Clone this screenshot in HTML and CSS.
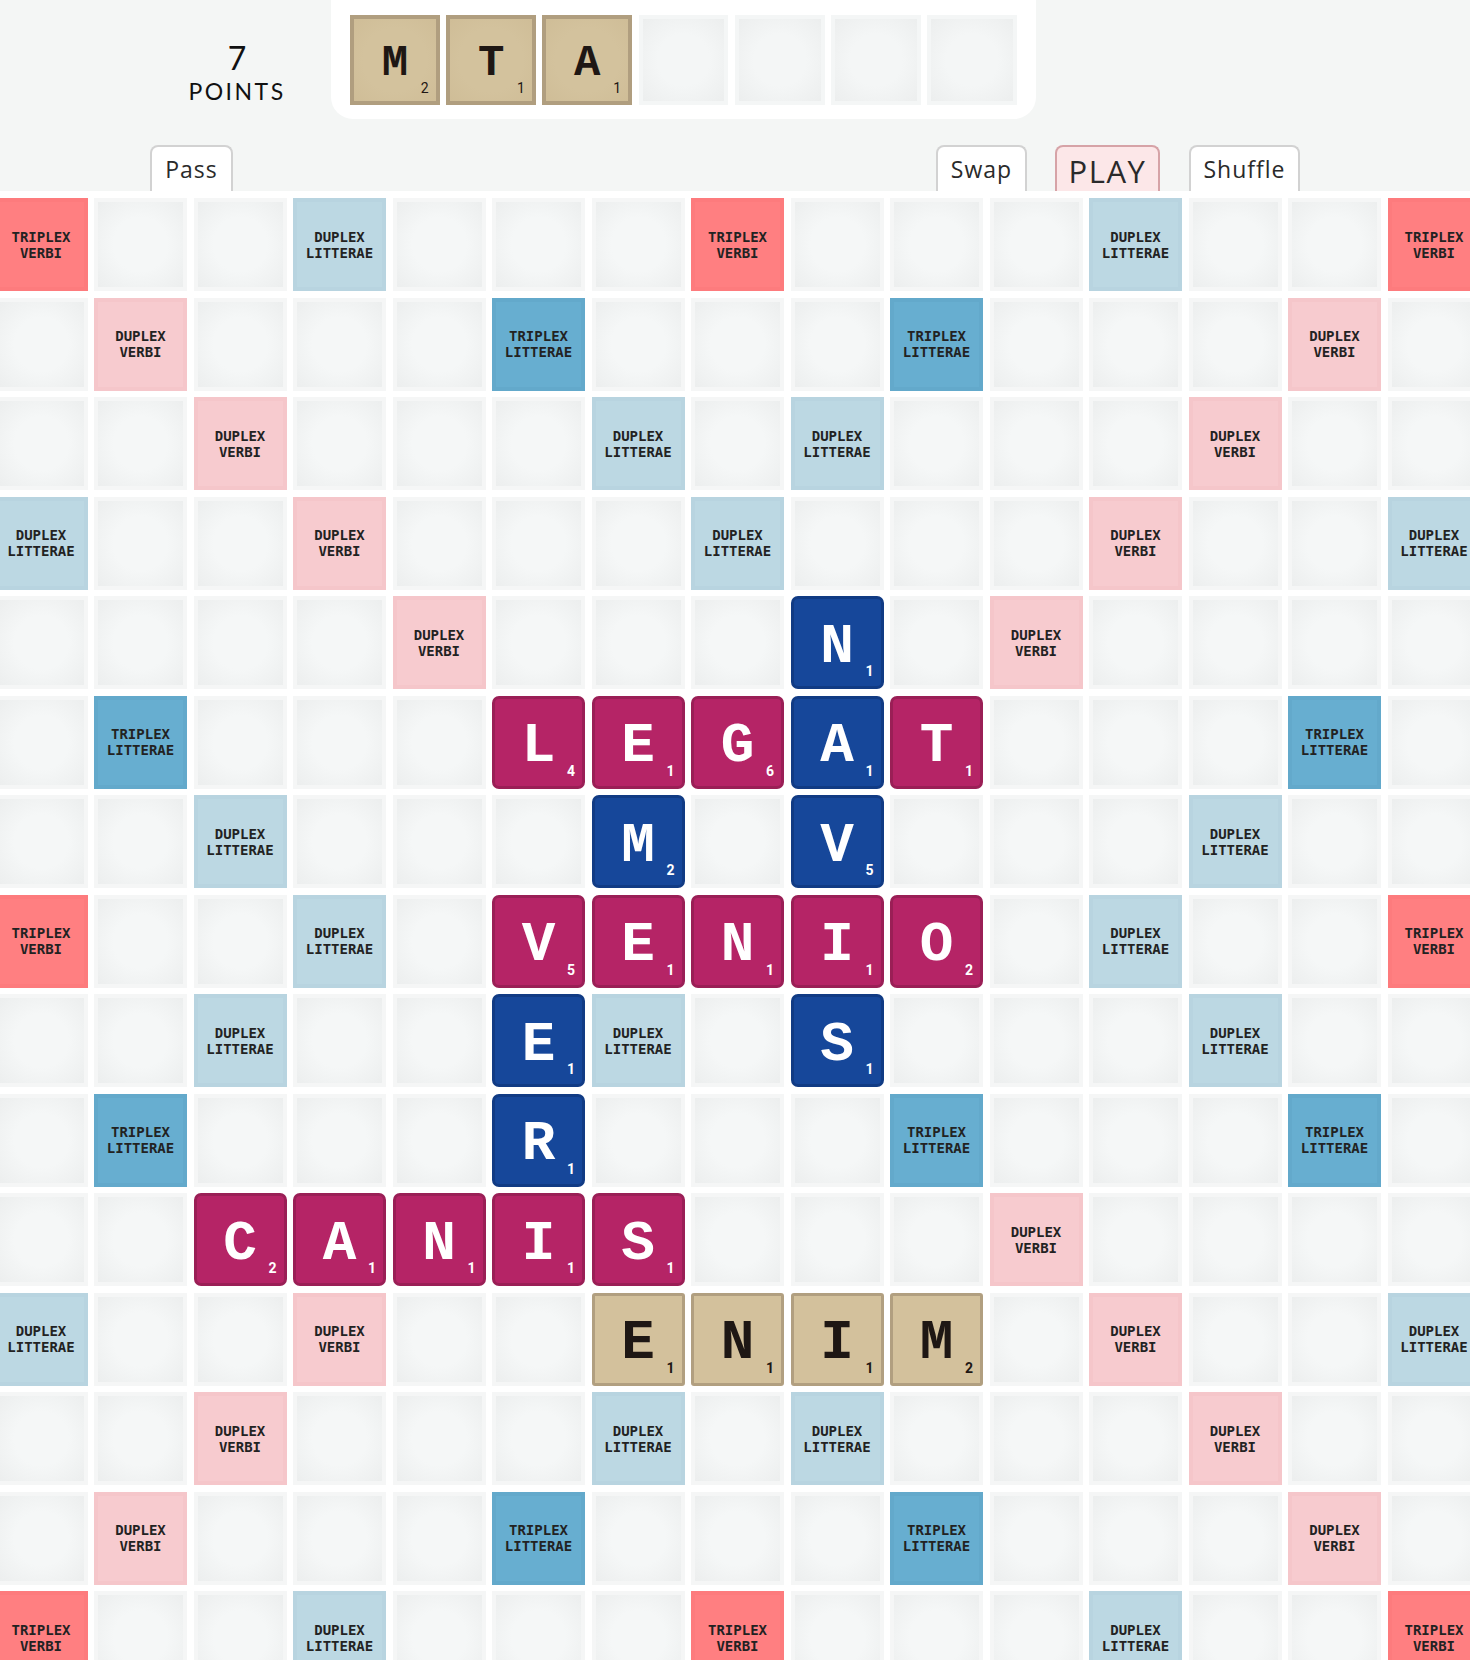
FILE: index.html
```html
<!DOCTYPE html>
<html lang="la">
<head>
<meta charset="utf-8">
<title>Verba</title>
<link rel="stylesheet" href="styles.css">
</head>
<body>
<header class="top">
  <div class="score">
    <div class="num">7</div>
    <div class="lbl">POINTS</div>
  </div>
  <div class="rack">
    <div class="rtile">M<span class="rp">2</span></div>
    <div class="rtile">T<span class="rp">1</span></div>
    <div class="rtile">A<span class="rp">1</span></div>
    <div class="slot"></div>
    <div class="slot"></div>
    <div class="slot"></div>
    <div class="slot"></div>
  </div>
</header>
<nav class="actions">
  <button class="btn pass">Pass</button>
  <div class="spacer"></div>
  <button class="btn swap">Swap</button>
  <button class="btn play">PLAY</button>
  <button class="btn shuffle">Shuffle</button>
</nav>
<main class="board">
  <!-- row 0 -->
  <div class="cell tw"><span>TRIPLEX<br>VERBI</span></div><div class="cell"></div><div class="cell"></div><div class="cell dl"><span>DUPLEX<br>LITTERAE</span></div><div class="cell"></div><div class="cell"></div><div class="cell"></div><div class="cell tw"><span>TRIPLEX<br>VERBI</span></div><div class="cell"></div><div class="cell"></div><div class="cell"></div><div class="cell dl"><span>DUPLEX<br>LITTERAE</span></div><div class="cell"></div><div class="cell"></div><div class="cell tw"><span>TRIPLEX<br>VERBI</span></div>
  <!-- row 1 -->
  <div class="cell"></div><div class="cell dw"><span>DUPLEX<br>VERBI</span></div><div class="cell"></div><div class="cell"></div><div class="cell"></div><div class="cell tl"><span>TRIPLEX<br>LITTERAE</span></div><div class="cell"></div><div class="cell"></div><div class="cell"></div><div class="cell tl"><span>TRIPLEX<br>LITTERAE</span></div><div class="cell"></div><div class="cell"></div><div class="cell"></div><div class="cell dw"><span>DUPLEX<br>VERBI</span></div><div class="cell"></div>
  <!-- row 2 -->
  <div class="cell"></div><div class="cell"></div><div class="cell dw"><span>DUPLEX<br>VERBI</span></div><div class="cell"></div><div class="cell"></div><div class="cell"></div><div class="cell dl"><span>DUPLEX<br>LITTERAE</span></div><div class="cell"></div><div class="cell dl"><span>DUPLEX<br>LITTERAE</span></div><div class="cell"></div><div class="cell"></div><div class="cell"></div><div class="cell dw"><span>DUPLEX<br>VERBI</span></div><div class="cell"></div><div class="cell"></div>
  <!-- row 3 -->
  <div class="cell dl"><span>DUPLEX<br>LITTERAE</span></div><div class="cell"></div><div class="cell"></div><div class="cell dw"><span>DUPLEX<br>VERBI</span></div><div class="cell"></div><div class="cell"></div><div class="cell"></div><div class="cell dl"><span>DUPLEX<br>LITTERAE</span></div><div class="cell"></div><div class="cell"></div><div class="cell"></div><div class="cell dw"><span>DUPLEX<br>VERBI</span></div><div class="cell"></div><div class="cell"></div><div class="cell dl"><span>DUPLEX<br>LITTERAE</span></div>
  <!-- row 4 -->
  <div class="cell"></div><div class="cell"></div><div class="cell"></div><div class="cell"></div><div class="cell dw"><span>DUPLEX<br>VERBI</span></div><div class="cell"></div><div class="cell"></div><div class="cell"></div><div class="tile blue"><b>N</b><i>1</i></div><div class="cell"></div><div class="cell dw"><span>DUPLEX<br>VERBI</span></div><div class="cell"></div><div class="cell"></div><div class="cell"></div><div class="cell"></div>
  <!-- row 5 -->
  <div class="cell"></div><div class="cell tl"><span>TRIPLEX<br>LITTERAE</span></div><div class="cell"></div><div class="cell"></div><div class="cell"></div><div class="tile mag"><b>L</b><i>4</i></div><div class="tile mag"><b>E</b><i>1</i></div><div class="tile mag"><b>G</b><i>6</i></div><div class="tile blue"><b>A</b><i>1</i></div><div class="tile mag"><b>T</b><i>1</i></div><div class="cell"></div><div class="cell"></div><div class="cell"></div><div class="cell tl"><span>TRIPLEX<br>LITTERAE</span></div><div class="cell"></div>
  <!-- row 6 -->
  <div class="cell"></div><div class="cell"></div><div class="cell dl"><span>DUPLEX<br>LITTERAE</span></div><div class="cell"></div><div class="cell"></div><div class="cell"></div><div class="tile blue"><b>M</b><i>2</i></div><div class="cell"></div><div class="tile blue"><b>V</b><i>5</i></div><div class="cell"></div><div class="cell"></div><div class="cell"></div><div class="cell dl"><span>DUPLEX<br>LITTERAE</span></div><div class="cell"></div><div class="cell"></div>
  <!-- row 7 -->
  <div class="cell tw"><span>TRIPLEX<br>VERBI</span></div><div class="cell"></div><div class="cell"></div><div class="cell dl"><span>DUPLEX<br>LITTERAE</span></div><div class="cell"></div><div class="tile mag"><b>V</b><i>5</i></div><div class="tile mag"><b>E</b><i>1</i></div><div class="tile mag"><b>N</b><i>1</i></div><div class="tile mag"><b>I</b><i>1</i></div><div class="tile mag"><b>O</b><i>2</i></div><div class="cell"></div><div class="cell dl"><span>DUPLEX<br>LITTERAE</span></div><div class="cell"></div><div class="cell"></div><div class="cell tw"><span>TRIPLEX<br>VERBI</span></div>
  <!-- row 8 -->
  <div class="cell"></div><div class="cell"></div><div class="cell dl"><span>DUPLEX<br>LITTERAE</span></div><div class="cell"></div><div class="cell"></div><div class="tile blue"><b>E</b><i>1</i></div><div class="cell dl"><span>DUPLEX<br>LITTERAE</span></div><div class="cell"></div><div class="tile blue"><b>S</b><i>1</i></div><div class="cell"></div><div class="cell"></div><div class="cell"></div><div class="cell dl"><span>DUPLEX<br>LITTERAE</span></div><div class="cell"></div><div class="cell"></div>
  <!-- row 9 -->
  <div class="cell"></div><div class="cell tl"><span>TRIPLEX<br>LITTERAE</span></div><div class="cell"></div><div class="cell"></div><div class="cell"></div><div class="tile blue"><b>R</b><i>1</i></div><div class="cell"></div><div class="cell"></div><div class="cell"></div><div class="cell tl"><span>TRIPLEX<br>LITTERAE</span></div><div class="cell"></div><div class="cell"></div><div class="cell"></div><div class="cell tl"><span>TRIPLEX<br>LITTERAE</span></div><div class="cell"></div>
  <!-- row 10 -->
  <div class="cell"></div><div class="cell"></div><div class="tile mag"><b>C</b><i>2</i></div><div class="tile mag"><b>A</b><i>1</i></div><div class="tile mag"><b>N</b><i>1</i></div><div class="tile mag"><b>I</b><i>1</i></div><div class="tile mag"><b>S</b><i>1</i></div><div class="cell"></div><div class="cell"></div><div class="cell"></div><div class="cell dw"><span>DUPLEX<br>VERBI</span></div><div class="cell"></div><div class="cell"></div><div class="cell"></div><div class="cell"></div>
  <!-- row 11 -->
  <div class="cell dl"><span>DUPLEX<br>LITTERAE</span></div><div class="cell"></div><div class="cell"></div><div class="cell dw"><span>DUPLEX<br>VERBI</span></div><div class="cell"></div><div class="cell"></div><div class="tile sand"><b>E</b><i>1</i></div><div class="tile sand"><b>N</b><i>1</i></div><div class="tile sand"><b>I</b><i>1</i></div><div class="tile sand"><b>M</b><i>2</i></div><div class="cell"></div><div class="cell dw"><span>DUPLEX<br>VERBI</span></div><div class="cell"></div><div class="cell"></div><div class="cell dl"><span>DUPLEX<br>LITTERAE</span></div>
  <!-- row 12 -->
  <div class="cell"></div><div class="cell"></div><div class="cell dw"><span>DUPLEX<br>VERBI</span></div><div class="cell"></div><div class="cell"></div><div class="cell"></div><div class="cell dl"><span>DUPLEX<br>LITTERAE</span></div><div class="cell"></div><div class="cell dl"><span>DUPLEX<br>LITTERAE</span></div><div class="cell"></div><div class="cell"></div><div class="cell"></div><div class="cell dw"><span>DUPLEX<br>VERBI</span></div><div class="cell"></div><div class="cell"></div>
  <!-- row 13 -->
  <div class="cell"></div><div class="cell dw"><span>DUPLEX<br>VERBI</span></div><div class="cell"></div><div class="cell"></div><div class="cell"></div><div class="cell tl"><span>TRIPLEX<br>LITTERAE</span></div><div class="cell"></div><div class="cell"></div><div class="cell"></div><div class="cell tl"><span>TRIPLEX<br>LITTERAE</span></div><div class="cell"></div><div class="cell"></div><div class="cell"></div><div class="cell dw"><span>DUPLEX<br>VERBI</span></div><div class="cell"></div>
  <!-- row 14 -->
  <div class="cell tw"><span>TRIPLEX<br>VERBI</span></div><div class="cell"></div><div class="cell"></div><div class="cell dl"><span>DUPLEX<br>LITTERAE</span></div><div class="cell"></div><div class="cell"></div><div class="cell"></div><div class="cell tw"><span>TRIPLEX<br>VERBI</span></div><div class="cell"></div><div class="cell"></div><div class="cell"></div><div class="cell dl"><span>DUPLEX<br>LITTERAE</span></div><div class="cell"></div><div class="cell"></div><div class="cell tw"><span>TRIPLEX<br>VERBI</span></div>
</main>
</body>
</html>
```
FILE: styles.css
```css
html, body {
  margin: 0;
  padding: 0;
  overflow: hidden;
  background: #f4f6f5;
}
body {
  font-family: "Open Sans", "Noto Sans", sans-serif;
  color: #1a1a1a;
}

/* ---------- header ---------- */
.top {
  display: flex;
  height: 119px;
}
.score {
  width: 118px;
  margin-left: 178px;
  padding-top: 38px;
  text-align: center;
  color: #111;
  font-family: "Lato", "Open Sans", sans-serif;
}
.num {
  font-size: 32px;
  line-height: 39px;
}
.lbl {
  font-size: 23px;
  line-height: 28px;
  letter-spacing: 2.5px;
}
.rack {
  margin-left: 35px;
  width: 705px;
  height: 119px;
  box-sizing: border-box;
  padding: 15px 19px 0 19px;
  background: #fff;
  border-radius: 0 0 22px 22px;
  display: flex;
  gap: 6.5px;
}
.rtile, .slot {
  position: relative;
  flex: 1;
  height: 90px;
  box-sizing: border-box;
}
.rtile {
  border: 4px solid #b09e7f;
  background: radial-gradient(circle at 50% 50%, #d3c29d 55%, #cfbd97 100%);
  font-family: "Liberation Mono", "DejaVu Sans Mono", monospace;
  font-weight: 700;
  font-size: 44px;
  color: #1e1714;
  display: flex;
  align-items: center;
  justify-content: center;
  padding-top: 5px;
}
.rp {
  position: absolute;
  right: 7px;
  bottom: 6px;
  font-family: "Roboto", sans-serif;
  font-weight: 400;
  font-size: 14px;
  line-height: 14px;
}
.slot {
  border: 4px solid #f4f6f6;
  background: radial-gradient(circle at 50% 50%, #f4f6f6 45%, #eceeee 100%);
}

/* ---------- buttons ---------- */
.actions {
  display: flex;
  height: 46px;
  margin-top: 26px;
  padding: 0 170px 0 150px;
}
.spacer { flex: 1; }
.btn {
  height: 48px;
  box-sizing: border-box;
  border: 2px solid #d2d2d2;
  border-bottom: none;
  border-radius: 8px 8px 0 0;
  background: #fff;
  font-family: "Open Sans", "Noto Sans", sans-serif;
  font-size: 23px;
  letter-spacing: 1px;
  color: #2a2a2a;
  padding: 0 0 3px;
  cursor: pointer;
}
.pass { width: 83px; }
.swap { width: 91px; }
.play {
  width: 105px;
  margin-left: 28px;
  background: #fce7e8;
  border-color: #d6a3a7;
  font-size: 31px;
  letter-spacing: 1.5px;
  padding-top: 3px;
}
.shuffle { width: 111px; margin-left: 29px; }

/* ---------- board ---------- */
.board {
  position: relative;
  width: 1486px;
  margin-left: -5.5px;
  padding-top: 7px;
  background: #fff;
  display: grid;
  grid-template-columns: repeat(15, 93px);
  grid-auto-rows: 93px;
  gap: 6.5px;
}
.cell {
  box-sizing: border-box;
  border: 4px solid #f5f6f6;
  background: radial-gradient(circle at 50% 50%, #f5f7f7 45%, #eceeee 100%);
  display: flex;
  align-items: center;
  justify-content: center;
  text-align: center;
}
.cell span {
  font-family: "DejaVu Sans Mono", monospace;
  font-weight: 700;
  font-size: 14px;
  line-height: 16px;
  color: #222;
}
.tw {
  background: #ff7f81;
  border-color: #fd7b7d;
}
.dw {
  background: #f7cbcf;
  border-color: #f5c6ca;
}
.dl {
  background: #bcd8e3;
  border-color: #b8d4e0;
}
.tl {
  background: #67aed0;
  border-color: #63a9cb;
}

.tile {
  position: relative;
  box-sizing: border-box;
  border: 3px solid;
  border-radius: 7px;
  display: flex;
  align-items: center;
  justify-content: center;
  padding-top: 8px;
  color: #fff;
}
.tile b {
  font-family: "Liberation Mono", "DejaVu Sans Mono", monospace;
  font-weight: 700;
  font-size: 56px;
  line-height: 1;
}
.tile i {
  position: absolute;
  right: 7px;
  bottom: 8px;
  font-family: "Roboto", sans-serif;
  font-style: normal;
  font-weight: 700;
  font-size: 14px;
  line-height: 14px;
}
.mag {
  background: #b52466;
  border-color: #9a1f56;
}
.blue {
  background: #16479a;
  border-color: #113b84;
}
.sand {
  background: #d3c19c;
  border-color: #b19f80;
  border-radius: 3px;
  color: #1e1714;
}
```
